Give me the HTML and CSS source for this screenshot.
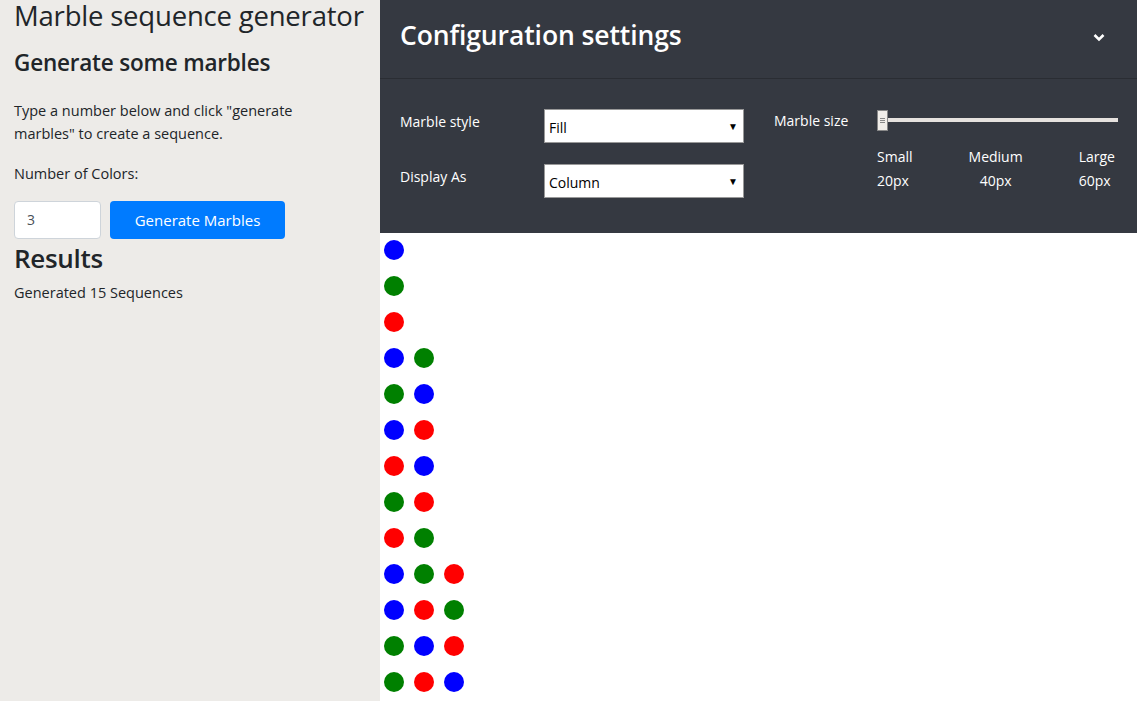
FILE: index.html
```html
<!DOCTYPE html>
<html>
<head>
<meta charset="utf-8">
<link rel="stylesheet" href="styles.css">
</head>
<body>
<div class="app">
  <aside class="sidebar">
    <h1 class="title">Marble sequence generator</h1>
    <h2 class="subtitle">Generate some marbles</h2>
    <p class="intro">Type a number below and click "generate marbles" to create a sequence.</p>
    <p class="label">Number of Colors:</p>
    <div class="form-row">
      <div class="num-input">3</div>
      <button class="btn-generate">Generate Marbles</button>
    </div>
    <h2 class="results">Results</h2>
    <p class="count">Generated 15 Sequences</p>
  </aside>
  <main class="main">
    <section class="config">
      <header class="config-head">
        <h2 class="config-title">Configuration settings</h2>
        <svg class="chevron" width="12" height="9" viewBox="0 0 12 9"><path d="M1.5 2 L6 6.5 L10.5 2" fill="none" stroke="#fff" stroke-width="2.6"/></svg>
      </header>
      <div class="config-body">
        <div class="field-grid">
          <span class="field-label">Marble style</span>
          <div class="select"><span>Fill</span><span class="caret">▼</span></div>
          <span class="field-label">Display As</span>
          <div class="select"><span>Column</span><span class="caret">▼</span></div>
        </div>
        <div class="size-block">
          <span class="field-label size-label">Marble size</span>
          <div class="slider-col">
            <div class="slider"><div class="track"></div><div class="thumb"><i></i><i></i><i></i></div></div>
            <div class="scale">
              <div class="tick left"><span>Small</span><span>20px</span></div>
              <div class="tick mid"><span>Medium</span><span>40px</span></div>
              <div class="tick right"><span>Large</span><span>60px</span></div>
            </div>
          </div>
        </div>
      </div>
    </section>
    <section class="marbles">
      <div class="row"><span class="m b"></span></div>
      <div class="row"><span class="m g"></span></div>
      <div class="row"><span class="m r"></span></div>
      <div class="row"><span class="m b"></span><span class="m g"></span></div>
      <div class="row"><span class="m g"></span><span class="m b"></span></div>
      <div class="row"><span class="m b"></span><span class="m r"></span></div>
      <div class="row"><span class="m r"></span><span class="m b"></span></div>
      <div class="row"><span class="m g"></span><span class="m r"></span></div>
      <div class="row"><span class="m r"></span><span class="m g"></span></div>
      <div class="row"><span class="m b"></span><span class="m g"></span><span class="m r"></span></div>
      <div class="row"><span class="m b"></span><span class="m r"></span><span class="m g"></span></div>
      <div class="row"><span class="m g"></span><span class="m b"></span><span class="m r"></span></div>
      <div class="row"><span class="m g"></span><span class="m r"></span><span class="m b"></span></div>
      <div class="row"><span class="m r"></span><span class="m b"></span><span class="m g"></span></div>
      <div class="row"><span class="m r"></span><span class="m g"></span><span class="m b"></span></div>
    </section>
  </main>
</div>
</body>
</html>
```
FILE: styles.css
```css
* { box-sizing: border-box; }
html, body { margin: 0; padding: 0; height: 100%; overflow: hidden; }
body {
  font-family: "Open Sans", "Noto Sans", sans-serif;
  color: #212529;
  background: #fff;
}
.app { display: flex; height: 701px; overflow: hidden; }
.sidebar {
  width: 380px;
  flex: none;
  background: #edebe8;
  padding: 0 14px;
}
.title {
  margin: 0;
  font-size: 27.5px;
  font-weight: 500;
  line-height: 32px;
  letter-spacing: -0.2px;
  white-space: nowrap;
}
.subtitle {
  margin: 17px 0 0;
  font-size: 22.5px;
  font-weight: 600;
  line-height: 28px;
  letter-spacing: -0.2px;
}
.intro {
  margin: 22px 0 0;
  max-width: 310px;
  font-size: 14.5px;
  line-height: 23px;
}
.label { margin: 17px 0 0; font-size: 14.5px; line-height: 24px; }
.form-row { display: flex; gap: 9px; margin-top: 15px; }
.num-input {
  width: 87px; height: 38px;
  background: #fff;
  border: 1px solid #ced4da;
  border-radius: 4px;
  padding: 0 12px;
  font-size: 14px;
  line-height: 36px;
  color: #495057;
}
.btn-generate {
  width: 175px; height: 38px;
  background: #007bff;
  color: #fff;
  border: none;
  border-radius: 4px;
  font-family: inherit;
  font-size: 15px;
}
.results {
  margin: 0;
  font-size: 26px;
  font-weight: 600;
  line-height: 38px;
  letter-spacing: -0.3px;
}
.count { margin: 6px 0 0; font-size: 14.5px; line-height: 20px; }

.main { flex: 1; display: flex; flex-direction: column; }
.config { background: #353941; color: #fff; }
.config-head {
  height: 79px;
  display: flex;
  align-items: center;
  justify-content: space-between;
  padding: 0 32px 0 20px;
  border-bottom: 1px solid #2a2d33;
}
.config-title {
  margin: 0 0 8px;
  font-size: 26.5px;
  font-weight: 600;
  letter-spacing: -0.1px;
}
.chevron { margin-top: -3px; }
.config-body {
  height: 154px;
  display: flex;
  padding: 30px 19px 0 20px;
  gap: 30px;
}
.field-grid {
  display: grid;
  grid-template-columns: 144px 200px;
  row-gap: 21px;
  align-items: center;
  align-content: start;
}
.field-label { font-size: 14px; line-height: 20px; }
.field-grid .field-label { margin-top: -9px; }
.select {
  height: 34px;
  background: #fff;
  border: 1px solid #999;
  color: #000;
  font-size: 14px;
  display: flex;
  align-items: center;
  justify-content: space-between;
  padding: 3px 5px 0 4px;
}
.caret { font-size: 10px; margin-top: -4px; }
.size-block { display: flex; flex: 1; }
.size-label { width: 103px; margin-top: 2px; }
.slider-col { flex: 1; }
.slider { position: relative; height: 22px; }
.track {
  position: absolute; left: 4px; right: 0; top: 9px; height: 4px;
  background: #e6e2de;
}
.thumb {
  position: absolute; left: 0; top: 1px;
  width: 11px; height: 21px;
  background: #f0ede9;
  border: 1px solid #888;
  display: flex; flex-direction: column; justify-content: center; align-items: center; gap: 1px;
}
.thumb i { display: block; width: 5px; height: 1px; background: #888; }
.scale {
  display: flex;
  justify-content: space-between;
  margin-top: 14px;
}
.tick { display: flex; flex-direction: column; font-size: 14px; line-height: 24px; }
.tick.mid { align-items: center; }
.tick.right { align-items: flex-start; margin-right: 3px; }

.marbles { padding: 7px 0 0 4px; }
.row { display: flex; gap: 10px; height: 36px; }
.m { width: 20px; height: 20px; border-radius: 50%; display: block; }
.b { background: #0000ff; }
.g { background: #008000; }
.r { background: #ff0000; }
```
